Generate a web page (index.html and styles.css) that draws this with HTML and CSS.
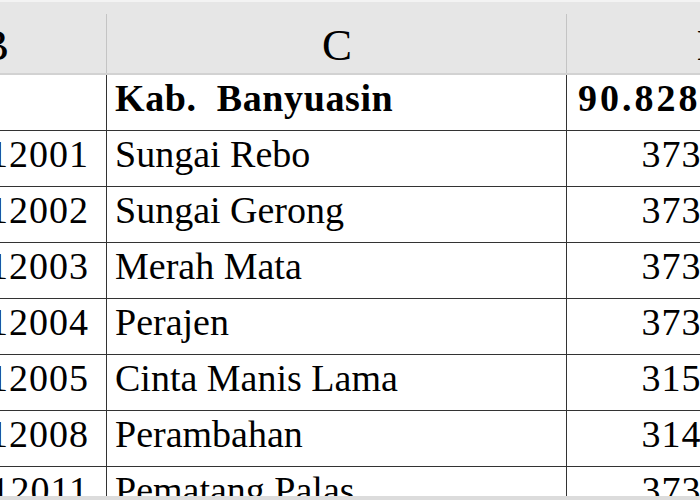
FILE: index.html
```html
<!DOCTYPE html>
<html>
<head>
<meta charset="utf-8">
<link rel="stylesheet" href="styles.css">
</head>
<body>
<div class="sheet">
  <div class="grid">
    <div class="hd hd-b">B</div>
    <div class="hd hd-c">C</div>
    <div class="hd hd-d">D</div>

    <div class="cell num"></div>
    <div class="cell txt bold">Kab.&nbsp; Banyuasin</div>
    <div class="cell val bold">90.828.640</div>

    <div class="cell num">1607012001</div>
    <div class="cell txt">Sungai Rebo</div>
    <div class="cell val">373.360</div>

    <div class="cell num">1607012002</div>
    <div class="cell txt">Sungai Gerong</div>
    <div class="cell val">373.360</div>

    <div class="cell num">1607012003</div>
    <div class="cell txt">Merah Mata</div>
    <div class="cell val">373.360</div>

    <div class="cell num">1607012004</div>
    <div class="cell txt">Perajen</div>
    <div class="cell val">373.360</div>

    <div class="cell num">1607012005</div>
    <div class="cell txt">Cinta Manis Lama</div>
    <div class="cell val">315.410</div>

    <div class="cell num">1607012008</div>
    <div class="cell txt">Perambahan</div>
    <div class="cell val">314.860</div>

    <div class="cell num">1607012011</div>
    <div class="cell txt">Pematang Palas</div>
    <div class="cell val">373.360</div>
  </div>
  <div class="scroll"></div>
</div>
</body>
</html>
```

FILE: styles.css
```css
html, body {
  margin: 0;
  padding: 0;
  background: #ffffff;
}
.sheet {
  width: 700px;
  height: 500px;
  overflow: hidden;
  position: relative;
  font-family: "Liberation Serif", serif;
  color: #000;
}
.grid {
  display: grid;
  grid-template-columns: 226px 460px 292px;
  grid-template-rows: 75px repeat(8, 56px);
  margin-left: -119px;
}
.hd {
  background: #e6e6e6;
  border-top: 2px solid #f3f3f3;
  border-bottom: 2px solid #d2d2d2;
  font-size: 45px;
  line-height: 1.15;
  display: flex;
  align-items: flex-end;
  justify-content: center;
  padding-bottom: 1px;
  box-sizing: border-box;
  position: relative;
}
.hd-b::after,
.hd-c::after {
  content: "";
  position: absolute;
  right: 0;
  top: 12px;
  bottom: 0;
  width: 1px;
  background: #c4c4c4;
}
.cell {
  border-right: 1px solid #333;
  border-bottom: 1px solid #333;
  font-size: 38px;
  line-height: 1.15;
  display: flex;
  align-items: flex-end;
  padding-bottom: 9px;
  box-sizing: border-box;
  white-space: nowrap;
  overflow: hidden;
}
.cell.bold {
  font-weight: bold;
  letter-spacing: 0.6px;
}
.num {
  justify-content: flex-end;
  padding-right: 17px;
  letter-spacing: 1px;
}
.txt { padding-left: 8px; }
.val {
  justify-content: flex-end;
  padding-right: 86px;
  letter-spacing: 1px;
}
.cell.val.bold {
  letter-spacing: 3px;
  padding-right: 79px;
}
.scroll {
  position: absolute;
  left: 0;
  right: 0;
  bottom: 0;
  height: 4px;
  background: #dcdcdc;
}
```
